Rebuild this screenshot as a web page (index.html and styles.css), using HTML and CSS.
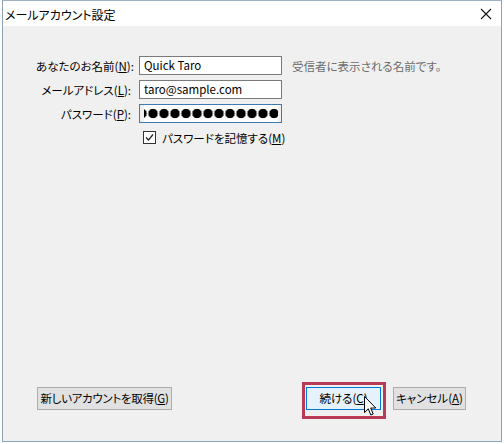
FILE: index.html
```html
<!DOCTYPE html>
<html lang="ja">
<head>
<meta charset="utf-8">
<link rel="stylesheet" href="styles.css">
</head>
<body>
<div class="window">
  <div class="titlebar">
    <span class="title">メールアカウント設定</span>
    <svg class="close" width="12" height="12" viewBox="0 0 12 12"><path d="M1 1 L11 11 M11 1 L1 11" stroke="#111" stroke-width="1.1" fill="none"/></svg>
  </div>
  <div class="content">
    <div class="form">
      <span class="lbl">あなたのお名前(<u>N</u>):</span>
      <div class="field">Quick Taro</div>
      <span class="hint">受信者に表示される名前です。</span>

      <span class="lbl">メールアドレス(<u>L</u>):</span>
      <div class="field">taro@sample.com</div>
      <span></span>

      <span class="lbl">パスワード(<u>P</u>):</span>
      <div class="field focused" aria-label="パスワード"></div>
      <span></span>

      <span></span>
      <div class="check-row">
        <svg class="checkbox" width="13" height="13" viewBox="0 0 13 13"><rect x="0.5" y="0.5" width="12" height="12" fill="#fff" stroke="#333"/><path d="M3 6.5 L5.5 9 L10 3.5" stroke="#222" stroke-width="1.2" fill="none"/></svg>
        <span>パスワードを記憶する(<u>M</u>)</span>
      </div>
      <span></span>
    </div>
    <div class="buttons">
      <button class="btn new">新しいアカウントを取得(<u>G</u>)</button>
      <div class="right">
        <span class="hl">
          <button class="btn primary">続ける(<u>C</u>)</button>
          <span class="frame"></span>
          <svg class="cursor" width="13" height="21" viewBox="0 0 13 21"><path d="M0.5 0.5 L0.5 16.5 L4.3 12.8 L6.8 19 L9.2 18 L6.7 12 L11.8 12 Z" fill="#fff" stroke="#000" stroke-width="1"/></svg>
        </span>
        <button class="btn cancel">キャンセル(<u>A</u>)</button>
      </div>
    </div>
  </div>
</div>
</body>
</html>
```
FILE: styles.css
```css
* { box-sizing: border-box; }
html, body { margin: 0; padding: 0; background: #fff; }
body {
  font-family: "Noto Sans CJK JP", "Noto Sans", sans-serif;
  font-size: 11.5px;
  color: #000;
  font-feature-settings: "palt";
}
.window {
  margin-left: 2px;
  width: 500px;
  height: 442px;
  border: 1px solid #8fa3b8;
  border-top-color: #9fb0c2;
  display: flex;
  flex-direction: column;
  background: #f0f0f0;
}
.titlebar {
  height: 25px;
  background: #fff;
  display: flex;
  align-items: center;
  justify-content: space-between;
  padding: 0 9px 0 2px;
  flex: none;
}
.title { font-size: 12px; line-height: 1; padding-top: 2px; }
.close { display: block; margin-top: 1px; }
.content {
  flex: 1;
  display: flex;
  flex-direction: column;
  justify-content: space-between;
  padding: 30px 35px 31px 33px;
}
.form {
  display: grid;
  grid-template-columns: 95px 143px auto;
  grid-auto-rows: 19px;
  column-gap: 8px;
  row-gap: 5px;
  align-items: center;
}
.lbl { text-align: right; white-space: nowrap; }
.field {
  height: 19px;
  background: #fff;
  border: 1px solid #7a7a7a;
  padding: 0 4px;
  line-height: 17px;
  white-space: nowrap;
  overflow: hidden;
}
.field.focused {
  border-color: #3d7ab0;
  background-color: #fff;
  background-image: radial-gradient(circle at center, #000 4.4px, rgba(0,0,0,0) 5.1px);
  background-size: 11px 17px;
  background-position: -3.5px 0;
  background-repeat: repeat-x;
  background-origin: padding-box;
  background-clip: content-box;
  padding: 0 3px 0 4px;
}
.hint { color: #6d6d6d; white-space: nowrap; padding-left: 2px; }
.check-row {
  display: flex;
  align-items: center;
  gap: 6px;
  padding-left: 4px;
  white-space: nowrap;
}
.checkbox { display: block; flex: none; }
.buttons {
  display: flex;
  justify-content: space-between;
  align-items: center;
  padding-left: 1px;
}
.right { display: flex; gap: 12px; align-items: center; }
.btn {
  font-family: inherit;
  font-size: 11.5px;
  font-feature-settings: "palt";
  color: #000;
  height: 23px;
  background: #e1e1e1;
  border: 1px solid #adadad;
  border-radius: 0;
  padding: 0;
  margin: 0;
  line-height: 21px;
  white-space: nowrap;
  text-align: center;
}
.btn.new { width: 135px; letter-spacing: -0.3px; }
.btn.primary {
  width: 75px;
  background: #e5f1fb;
  border-color: #0078d7;
}
.btn.cancel { width: 73px; }
.hl { position: relative; display: block; }
.hl .btn { display: block; }
.frame {
  position: absolute;
  left: -4px;
  top: -5px;
  right: -5px;
  bottom: -9px;
  border: 3px solid #b93a54;
  pointer-events: none;
}
.cursor {
  position: absolute;
  left: 58px;
  top: 9px;
}
```
